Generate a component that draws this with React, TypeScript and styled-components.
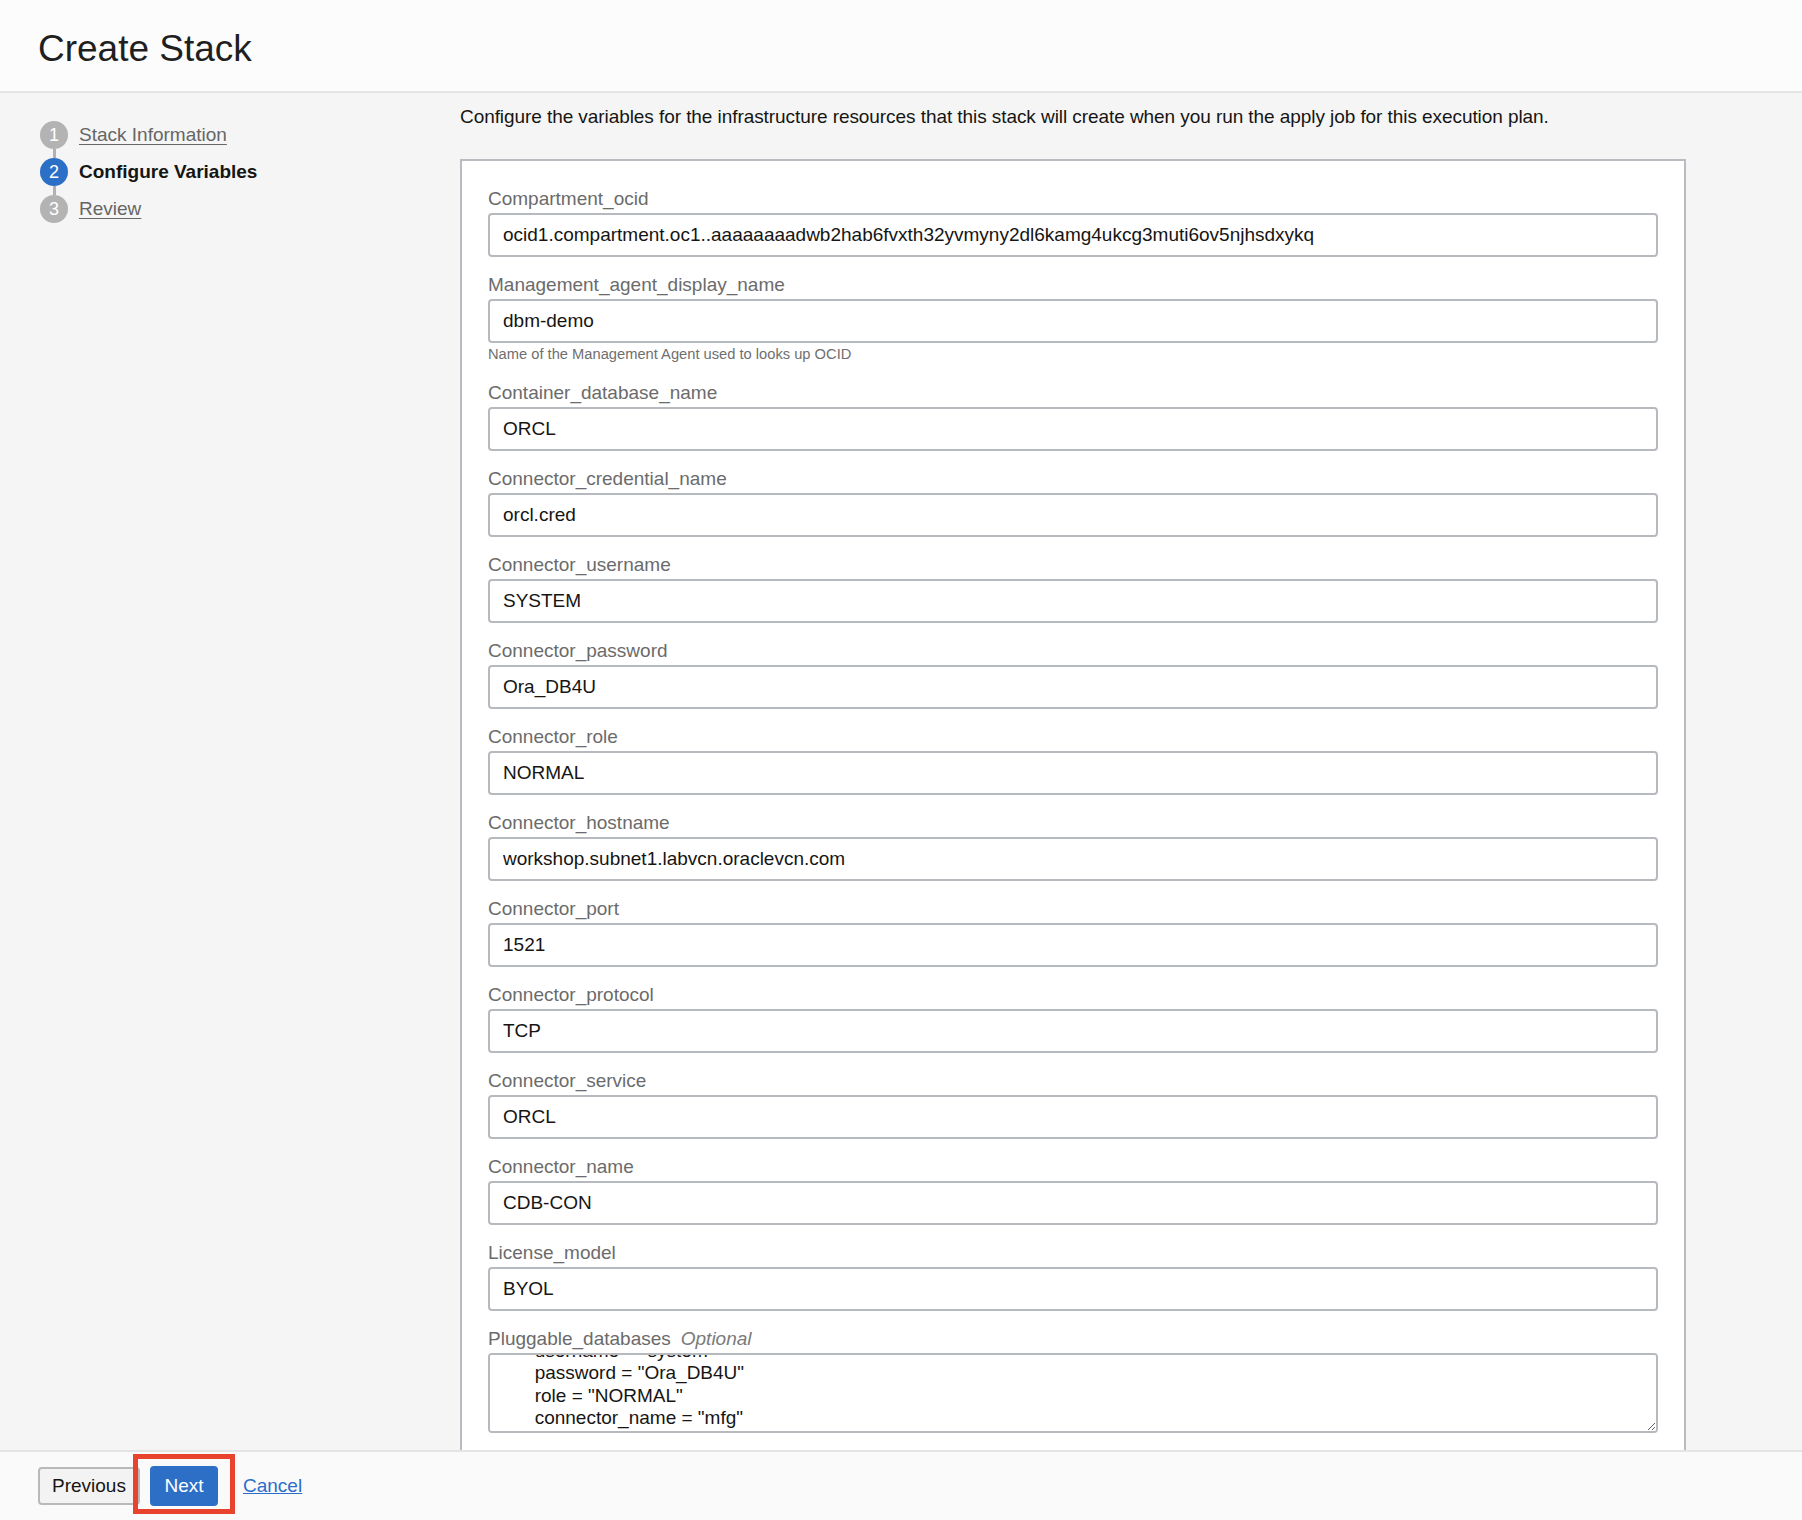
import { useEffect, useRef } from "react";
import styled, { createGlobalStyle } from "styled-components";

const GlobalStyle = createGlobalStyle`
  html, body {
    margin: 0;
    padding: 0;
    height: 100%;
  }
  body {
    background: #f5f5f5;
    color: #161513;
    font-family: "Liberation Sans", Arial, Helvetica, sans-serif;
  }
  #root {
    height: 100%;
  }
`;

type Field = {
  name: string;
  value: string;
  help?: string;
};

const fields: Field[] = [
  {
    name: "Compartment_ocid",
    value:
      "ocid1.compartment.oc1..aaaaaaaadwb2hab6fvxth32yvmyny2dl6kamg4ukcg3muti6ov5njhsdxykq",
  },
  {
    name: "Management_agent_display_name",
    value: "dbm-demo",
    help: "Name of the Management Agent used to looks up OCID",
  },
  { name: "Container_database_name", value: "ORCL" },
  { name: "Connector_credential_name", value: "orcl.cred" },
  { name: "Connector_username", value: "SYSTEM" },
  { name: "Connector_password", value: "Ora_DB4U" },
  { name: "Connector_role", value: "NORMAL" },
  { name: "Connector_hostname", value: "workshop.subnet1.labvcn.oraclevcn.com" },
  { name: "Connector_port", value: "1521" },
  { name: "Connector_protocol", value: "TCP" },
  { name: "Connector_service", value: "ORCL" },
  { name: "Connector_name", value: "CDB-CON" },
  { name: "License_model", value: "BYOL" },
];

const pdbValue = [
  "  [",
  "    {",
  '      pdb_name = "MFG"',
  '      username = "system"',
  '      password = "Ora_DB4U"',
  '      role = "NORMAL"',
  '      connector_name = "mfg"',
  "    },",
  "  ]",
].join("\n");

const steps = [
  { n: 1, label: "Stack Information", state: "done" },
  { n: 2, label: "Configure Variables", state: "active" },
  { n: 3, label: "Review", state: "todo" },
] as const;

export default function App() {
  const pdbRef = useRef<HTMLTextAreaElement>(null);

  useEffect(() => {
    if (pdbRef.current) pdbRef.current.scrollTop = 91;
  }, []);

  return (
    <>
      <GlobalStyle />
      <Page>
        <Header>
          <Title>Create Stack</Title>
        </Header>
        <Body>
          <Sidebar>
            {steps.map((s, i) => (
              <StepBlock key={s.n}>
                {i > 0 && <Connector />}
                <StepRow>
                  <StepCircle $active={s.state === "active"}>{s.n}</StepCircle>
                  <StepLabel $active={s.state === "active"}>{s.label}</StepLabel>
                </StepRow>
              </StepBlock>
            ))}
          </Sidebar>
          <Main>
            <Intro>
              Configure the variables for the infrastructure resources that this stack will
              create when you run the apply job for this execution plan.
            </Intro>
            <Panel>
              {fields.map((f) => (
                <FieldBlock key={f.name}>
                  <Label>{f.name}</Label>
                  <Input defaultValue={f.value} />
                  {f.help && <Help>{f.help}</Help>}
                </FieldBlock>
              ))}
              <FieldBlock>
                <Label>
                  Pluggable_databases<Optional>Optional</Optional>
                </Label>
                <TextArea ref={pdbRef} defaultValue={pdbValue} spellCheck={false} />
              </FieldBlock>
            </Panel>
          </Main>
        </Body>
        <Footer>
          <PrevButton>Previous</PrevButton>
          <Highlight>
            <NextButton>Next</NextButton>
          </Highlight>
          <CancelLink href="#">Cancel</CancelLink>
        </Footer>
      </Page>
    </>
  );
}

const Page = styled.div`
  display: flex;
  flex-direction: column;
  height: 100vh;
  overflow: hidden;
`;

const Header = styled.header`
  flex: none;
  display: flex;
  align-items: center;
  box-sizing: border-box;
  height: 93px;
  padding: 0 38px;
  background: #fcfcfc;
  border-bottom: 2px solid #e4e4e4;
`;

const Title = styled.h1`
  margin: 6px 0 0;
  font-size: 37px;
  font-weight: 400;
  color: #1f1f1f;
`;

const Body = styled.div`
  flex: 1;
  min-height: 0;
  overflow: hidden;
  display: grid;
  grid-template-columns: 460px 1226px;
  align-items: start;
`;

const Sidebar = styled.nav`
  display: flex;
  flex-direction: column;
  padding: 28px 0 0 40px;
`;

const StepBlock = styled.div`
  display: flex;
  flex-direction: column;
`;

const Connector = styled.div`
  width: 3px;
  height: 9px;
  margin-left: 12.5px;
  background: #b2b2b2;
`;

const StepRow = styled.div`
  display: flex;
  align-items: center;
  gap: 11px;
  height: 28px;
`;

const StepCircle = styled.span<{ $active: boolean }>`
  display: flex;
  align-items: center;
  justify-content: center;
  width: 28px;
  height: 28px;
  border-radius: 50%;
  background: ${({ $active }) => ($active ? "#2c6fc6" : "#b3b3b3")};
  color: #fff;
  font-size: 18px;
`;

const StepLabel = styled.span<{ $active: boolean }>`
  font-size: 19px;
  font-weight: ${({ $active }) => ($active ? 700 : 400)};
  color: ${({ $active }) => ($active ? "#161513" : "#666")};
  text-decoration: ${({ $active }) => ($active ? "none" : "underline")};
  text-underline-offset: 3px;
`;

const Main = styled.main`
  padding-top: 13px;
`;

const Intro = styled.p`
  margin: 0 0 31px;
  font-size: 19px;
  line-height: 22px;
  letter-spacing: -0.07px;
  color: #161513;
`;

const Panel = styled.section`
  background: #fff;
  border: 2px solid #b8bcc0;
  padding: 27px 26px;
`;

const FieldBlock = styled.div`
  display: flex;
  flex-direction: column;
  padding-bottom: 17px;
`;

const Label = styled.label`
  display: block;
  margin-bottom: 3px;
  font-size: 19px;
  line-height: 22px;
  color: #6b6b6b;
`;

const Optional = styled.span`
  margin-left: 10px;
  font-style: italic;
  color: #7a7a7a;
`;

const Input = styled.input`
  box-sizing: border-box;
  width: 100%;
  height: 44px;
  padding: 0 13px;
  border: 2px solid #b6babf;
  border-radius: 4px;
  background: #fff;
  font-family: inherit;
  font-size: 19px;
  color: #161513;
  outline: none;
`;

const Help = styled.div`
  margin: 3px 0 2px;
  font-size: 14.7px;
  line-height: 17px;
  color: #6f6f6f;
`;

const TextArea = styled.textarea`
  box-sizing: border-box;
  width: 100%;
  height: 80px;
  padding: 8px 13px;
  border: 2px solid #b6babf;
  border-radius: 4px;
  background: #fff;
  font-family: inherit;
  font-size: 19px;
  line-height: 22.5px;
  color: #161513;
  resize: vertical;
  overflow-y: scroll;
  scrollbar-width: none;
  outline: none;
  white-space: pre;
`;

const Footer = styled.footer`
  flex: none;
  display: flex;
  align-items: center;
  box-sizing: border-box;
  height: 70px;
  padding-left: 38px;
  background: #fafafa;
  border-top: 2px solid #e4e4e4;
`;

const PrevButton = styled.button`
  box-sizing: border-box;
  height: 38px;
  padding: 0 12px;
  border: 2px solid #b9b9b9;
  border-radius: 4px;
  background: #f3f3f3;
  font-family: inherit;
  font-size: 19px;
  color: #161513;
`;

const Highlight = styled.div`
  position: relative;
  margin-left: 10px;

  &::after {
    content: "";
    position: absolute;
    top: -12px;
    bottom: -8px;
    left: -17px;
    right: -17px;
    border: 5px solid #e8432d;
    pointer-events: none;
  }
`;

const NextButton = styled.button`
  display: block;
  height: 40px;
  padding: 0 14.5px;
  border: none;
  border-radius: 4px;
  background: #2d6fc6;
  font-family: inherit;
  font-size: 19px;
  color: #fff;
`;

const CancelLink = styled.a`
  margin-left: 25px;
  font-size: 19px;
  color: #2b6dca;
  text-decoration: underline;
`;
